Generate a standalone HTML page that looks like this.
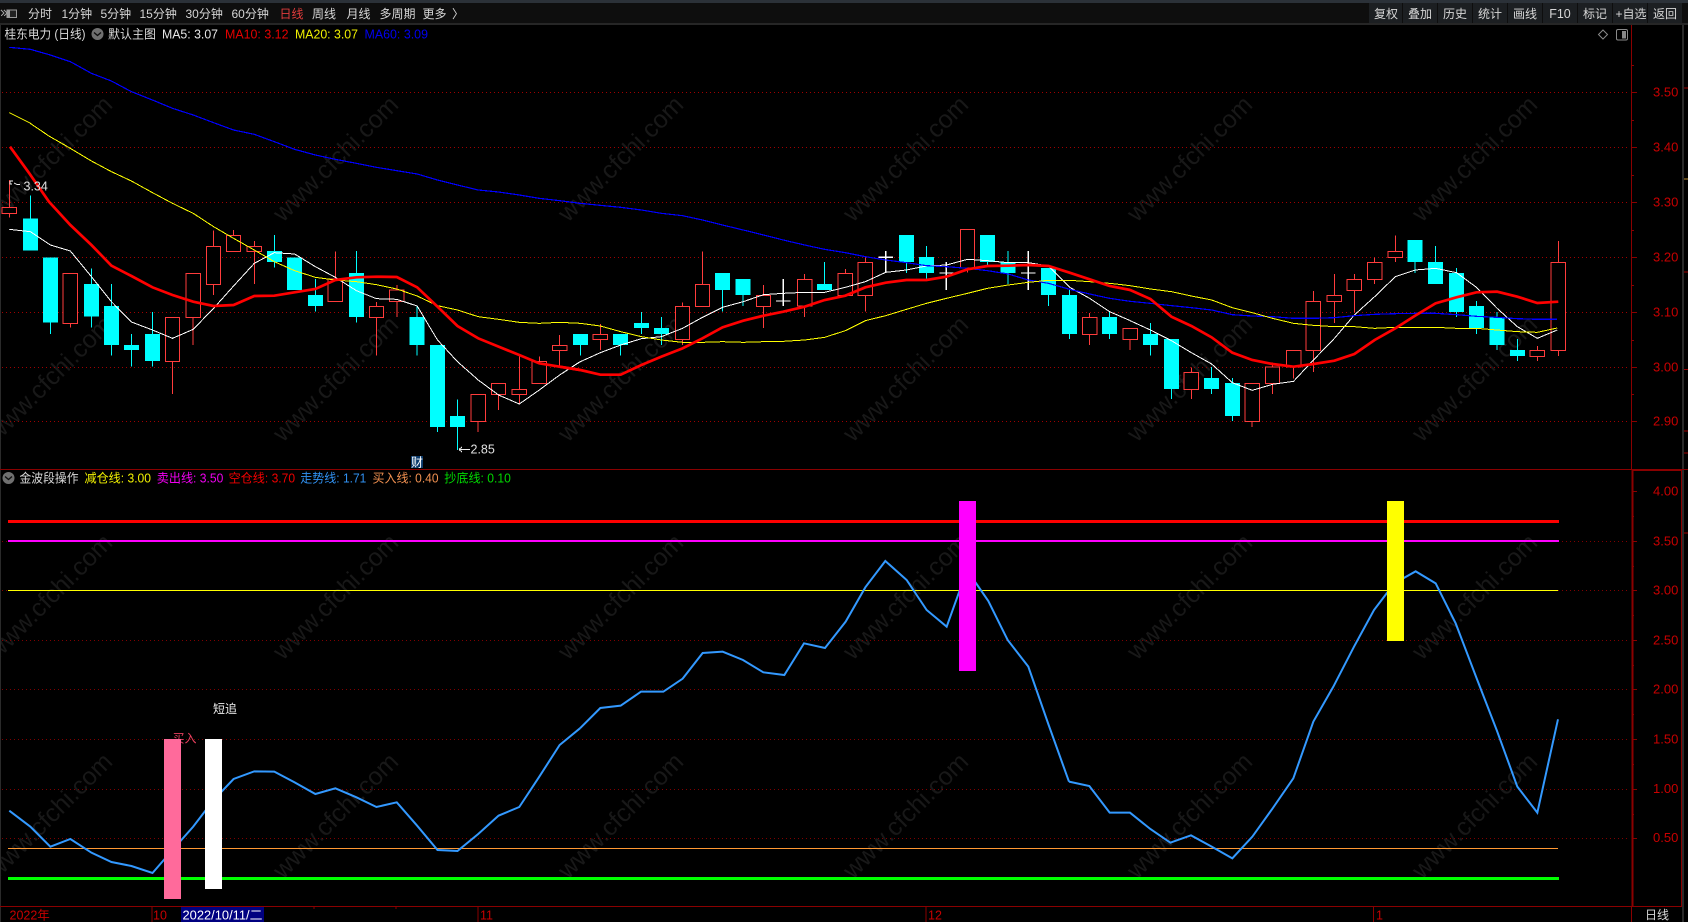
<!DOCTYPE html>
<html><head><meta charset="utf-8"><title>桂东电力</title>
<style>
html,body{margin:0;padding:0;background:#000;width:1688px;height:922px;overflow:hidden}
svg{display:block;font-family:"Liberation Sans","Noto Sans CJK SC",sans-serif;font-size:12.5px}
path,polyline{vector-effect:non-scaling-stroke;fill:none;shape-rendering:crispEdges}
.cw{stroke:#0ff;stroke-width:1}
.cb{stroke:#0ff;stroke-width:15}
.rw{stroke:#ff3c3c;stroke-width:1}
.rb{stroke:#ff3c3c;stroke-width:1;fill:#000}
.wd{stroke:#fff;stroke-width:1.4}
.m5{stroke:#fff;stroke-width:1}
.m10{stroke:#f00;stroke-width:2.7;shape-rendering:auto}
.m20{stroke:#ff0;stroke-width:1}
.m60{stroke:#00f;stroke-width:1.2}
.lb{stroke:#39f;stroke-width:2;shape-rendering:auto}
.g{stroke:#a00000;stroke-width:1;stroke-dasharray:1 3}
.g2{stroke:#800000;stroke-width:1;stroke-dasharray:1 3}
.ax{stroke:#8a0000;stroke-width:1}
.t{fill:#d6d6d6;font-size:12px}
.p{fill:#c80000;font-size:13px}
.wm{fill:#181818;font-size:25px}
</style></head><body>
<svg xmlns="http://www.w3.org/2000/svg" width="1688" height="922" viewBox="0 0 1688 922">
<rect width="1688" height="922" fill="#000"/>

<!-- watermark -->
<g class="wm" transform="translate(5 7)">
<text transform="translate(-8 216) rotate(-45)">www.cfchi.com</text><text transform="translate(278 216) rotate(-45)">www.cfchi.com</text><text transform="translate(563 216) rotate(-45)">www.cfchi.com</text><text transform="translate(848 216) rotate(-45)">www.cfchi.com</text><text transform="translate(1132 216) rotate(-45)">www.cfchi.com</text><text transform="translate(1417 216) rotate(-45)">www.cfchi.com</text>
<text transform="translate(-8 436) rotate(-45)">www.cfchi.com</text><text transform="translate(278 436) rotate(-45)">www.cfchi.com</text><text transform="translate(563 436) rotate(-45)">www.cfchi.com</text><text transform="translate(848 436) rotate(-45)">www.cfchi.com</text><text transform="translate(1132 436) rotate(-45)">www.cfchi.com</text><text transform="translate(1417 436) rotate(-45)">www.cfchi.com</text>
<text transform="translate(-8 654) rotate(-45)">www.cfchi.com</text><text transform="translate(278 654) rotate(-45)">www.cfchi.com</text><text transform="translate(563 654) rotate(-45)">www.cfchi.com</text><text transform="translate(848 654) rotate(-45)">www.cfchi.com</text><text transform="translate(1132 654) rotate(-45)">www.cfchi.com</text><text transform="translate(1417 654) rotate(-45)">www.cfchi.com</text>
<text transform="translate(-8 873) rotate(-45)">www.cfchi.com</text><text transform="translate(278 873) rotate(-45)">www.cfchi.com</text><text transform="translate(563 873) rotate(-45)">www.cfchi.com</text><text transform="translate(848 873) rotate(-45)">www.cfchi.com</text><text transform="translate(1132 873) rotate(-45)">www.cfchi.com</text><text transform="translate(1417 873) rotate(-45)">www.cfchi.com</text>
</g>

<!-- toolbar -->
<rect x="0" y="0" width="1688" height="3" fill="#2b3138"/>
<rect x="0" y="3" width="1688" height="20" fill="#0e0e0e"/>
<rect x="0" y="23" width="1688" height="2" fill="#262626"/>
<path d="M1 10l3 3-3 3M4 10l3 3-3 3" stroke="#999" stroke-width="1"/>
<rect x="7" y="10" width="9.5" height="7.5" fill="#222" stroke="#999" stroke-width="1"/>
<rect x="7" y="10" width="3" height="7.5" fill="#999"/>
<g class="t">
<text x="28" y="18">分时</text><text x="61.5" y="18">1分钟</text><text x="100.5" y="18">5分钟</text><text x="139.5" y="18">15分钟</text><text x="185.5" y="18">30分钟</text><text x="231.5" y="18">60分钟</text>
<text x="279.5" y="18" fill="#e23c3c">日线</text><text x="312" y="18">周线</text><text x="346.5" y="18">月线</text><text x="379.5" y="18">多周期</text><text x="422.5" y="18">更多</text><text x="452" y="18">〉</text>
</g>
<g fill="#1c1f22">
<rect x="1369" y="3" width="33" height="20"/><rect x="1403" y="3" width="34" height="20"/><rect x="1438" y="3" width="34" height="20"/><rect x="1473" y="3" width="34" height="20"/><rect x="1508" y="3" width="34" height="20"/><rect x="1543" y="3" width="34" height="20"/><rect x="1578" y="3" width="34" height="20"/><rect x="1613" y="3" width="34" height="20"/><rect x="1648" y="3" width="34" height="20"/>
</g>
<g class="t" text-anchor="middle">
<text x="1386" y="18">复权</text><text x="1420" y="18">叠加</text><text x="1455" y="18">历史</text><text x="1490" y="18">统计</text><text x="1525" y="18">画线</text><text x="1560" y="18" font-size="12.5">F10</text><text x="1595" y="18">标记</text><text x="1631" y="18">+自选</text><text x="1665" y="18">返回</text>
</g>

<!-- left edge and scrollbar -->
<rect x="0" y="25" width="1" height="897" fill="#2a2a2a"/>
<rect x="1682" y="25" width="2" height="897" fill="#2a2a2a"/>
<path d="M1684 88h4M1684 272h4M1684 369.5h4M1684 431h4M1684 453h4M1684 533h4" stroke="#a00000"/>
<path d="M1684 179h4" stroke="#c09030"/>

<!-- grids -->
<path class="g" d="M2 92.5H1628M2 147.5H1628M2 202.5H1628M2 257.5H1628M2 312.5H1628M2 367.5H1628M2 421.5H1628"/>
<path class="g2" d="M2 541.5H1628M2 590.5H1628M2 640.5H1628M2 689.5H1628M2 739.5H1628M2 789.5H1628M2 838.5H1628"/>

<!-- axes -->
<path class="ax" d="M1631.5 25V470M1632 92.5h5M1632 147.5h5M1632 202.5h5M1632 257.5h5M1632 312.5h5M1632 367.5h5M1632 421.5h5M1632 120.5h2M1632 175.5h2M1632 230.5h2M1632 285.5h2M1632 340.5h2M1632 394.5h2M1632 65.5h2"/>
<path class="ax" d="M0 469.5H1688M0 906.5H1682M1631.5 906V922"/>
<path d="M1632.5 470V906" stroke="#8a0000" stroke-width="2"/>
<path d="M1632 470H1682" stroke="#8a0000" stroke-width="2"/>
<path d="M1681.5 470V906" stroke="#8a0000" stroke-width="1"/>
<path class="ax" d="M1633 491.5h4M1633 541.5h4M1633 590.5h4M1633 640.5h4M1633 689.5h4M1633 739.5h4M1633 789.5h4M1633 838.5h4M1633 516.5h1M1633 566.5h1M1633 615.5h1M1633 665.5h1M1633 714.5h1M1633 764.5h1M1633 814.5h1"/>
<g class="p">
<text x="1653" y="96.5">3.50</text><text x="1653" y="151.5">3.40</text><text x="1653" y="206.5">3.30</text><text x="1653" y="261.5">3.20</text><text x="1653" y="316.5">3.10</text><text x="1653" y="371.5">3.00</text><text x="1653" y="425.5">2.90</text>
<text x="1653" y="495.5">4.00</text><text x="1653" y="545.5">3.50</text><text x="1653" y="594.5">3.00</text><text x="1653" y="644.5">2.50</text><text x="1653" y="693.5">2.00</text><text x="1653" y="743.5">1.50</text><text x="1653" y="793">1.00</text><text x="1653" y="842">0.50</text>
</g>

<!-- title row -->
<g>
<text x="4.5" y="38.5" fill="#d8d8d8" textLength="81" lengthAdjust="spacingAndGlyphs">桂东电力 (日线)</text>
<circle cx="97.5" cy="34" r="6" fill="#707070"/><path d="M94 32.5l3.500 3 3.500-3" stroke="#111" stroke-width="1.4" style="shape-rendering:auto"/>
<text x="108" y="38.5" fill="#d8d8d8" textLength="48" lengthAdjust="spacingAndGlyphs">默认主图</text>
<text x="162" y="38.5" fill="#e6e6e6" textLength="56" lengthAdjust="spacingAndGlyphs">MA5: 3.07</text>
<text x="225" y="38.5" fill="#e60000" textLength="63.500" lengthAdjust="spacingAndGlyphs">MA10: 3.12</text>
<text x="295" y="38.5" fill="#f0f000" textLength="63" lengthAdjust="spacingAndGlyphs">MA20: 3.07</text>
<text x="364.500" y="38.5" fill="#0000f0" textLength="63.500" lengthAdjust="spacingAndGlyphs">MA60: 3.09</text>
<path d="M1603 30l4.500 4.500-4.500 4.500-4.500-4.500z" stroke="#8a8a8a" style="shape-rendering:auto"/>
<rect x="1616.500" y="29.500" width="11" height="10.500" rx="1.500" fill="none" stroke="#8a8a8a"/>
<rect x="1622" y="31" width="4" height="7.500" fill="#8a8a8a"/>
</g>

<!-- S1 candles -->
<g transform="translate(0 200) scale(.35714 .33333)">
<path class="cw" d="M85 -13V55M141 368V402M256 205V383M312 252V467M368 402V500M427 336V500M768 105V203M883 237V335M998 153V368M1168 318V467M1225 681V696M1281 598V750"/>
<path class="cb" d="M85 55V152M141 172V368M256 252V350M312 318V435M368 435V450M427 402V483M768 153V186M825 172V270M883 285V318M998 219V351M1168 351V435M1225 435V681M1281 648V681"/>
<path class="rw" d="M26 -60V52M197 370V383M483 485V582M541 352V435M598 91V285M654 90V106M712 123V252M939 155V237M1054 306V467M1111 255V351M1339 665V696M1396 583V630M1454 470V612M1510 470V484M1567 405V500"/>
<path class="rb" d="M6 22h40V40h-40zM177 220h40V370h-40zM463 352h40V485h-40zM521 220h40V352h-40zM578 139h40V253h-40zM634 106h40V155h-40zM692 139h40V155h-40zM919 237h40V305h-40zM1034 319h40V352h-40zM1091 270h40V305h-40zM1319 583h40V665h-40zM1376 550h40V583h-40zM1434 568h40V584h-40zM1490 484h40V551h-40zM1547 436h40V452h-40z"/>
</g>
<!-- S2 candles -->
<g transform="translate(560 200) scale(.35714 .33333)">
<path class="cw" d="M57 435V467M170 435V467M228 336V402M284 351V435M455 270V335M513 285V318M741 186V252M970 186V219M1026 138V235M1197 186V196M1255 153V252M1368 285V318M1427 270V417M1539 336V417"/>
<path class="cb" d="M57 402V435M170 402V435M228 369V384M284 384V402M455 219V270M513 237V285M741 252V270M970 105V186M1026 171V219M1197 105V186M1255 186V219M1368 204V285M1427 285V402M1539 351V402"/>
<path class="rw" d="M113 372V450M343 307V435M399 155V320M570 255V384M685 222V351M799 207V287M855 172V335M1141 204V218M1483 339V435"/>
<path class="rb" d="M93 403h40V419h-40zM323 319h40V418h-40zM379 253h40V320h-40zM550 286h40V320h-40zM665 238h40V318h-40zM779 220h40V287h-40zM835 187h40V287h-40zM1121 88h40V204h-40zM1463 352h40V404h-40z"/>
<path class="wd" d="M625 237V318M605 303h40M912 153V219M892 172h40M1082 186V270M1062 219h40M1311 153V270M1291 219h40"/>
</g>
<!-- S3 candles -->
<g transform="translate(1120 200) scale(.36224 .33333)">
<path class="cw" d="M84 369V467M142 567V597M253 501V582M310 534V663M815 186V219M871 138V186M929 204V351M984 303V402M1041 336V450M1097 417V483"/>
<path class="cb" d="M84 402V435M142 417V567M253 534V567M310 549V648M815 120V186M871 186V252M929 219V336M984 318V384M1041 351V435M1097 450V468"/>
<path class="rw" d="M28 385V450M197 503V597M365 665V681M421 487V582M479 501V535M534 273V516M592 222V369M647 222V337M703 172V252M760 107V186M1152 438V483M1210 123V468"/>
<path class="rb" d="M8 385h40V418h-40zM177 517h40V569h-40zM345 550h40V665h-40zM401 501h40V551h-40zM459 451h40V501h-40zM514 304h40V452h-40zM572 286h40V304h-40zM627 238h40V272h-40zM683 187h40V238h-40zM740 154h40V172h-40zM1132 451h40V469h-40zM1190 187h40V452h-40z"/>
</g>

<!-- MA lines -->
<g transform="translate(0 200) scale(.35714 .33333)">
<polyline class="m5" points="26,88 85,95 141,135 197,153 256,230 312,305 368,366 427,390 483,415 541,388 598,325 654,258 712,190 768,158 825,162 883,200 939,232 998,272 1054,296 1111,298 1168,318 1225,420 1281,485 1339,540 1396,585 1454,612 1510,570 1567,525 1624,485"/>
</g>
<g transform="translate(560 200) scale(.35714 .33333)">
<polyline class="m5" points="-1,525 57,485 113,458 170,435 228,416 284,410 343,385 399,352 455,322 513,305 570,284 625,280 685,277 741,277 799,262 855,245 912,217 970,210 1026,198 1082,195 1141,178 1197,182 1255,188 1311,188 1368,198 1427,262 1483,295 1539,335 1597,362"/>
</g>
<g transform="translate(1120 200) scale(.36224 .33333)">
<polyline class="m5" points="28,362 84,390 142,422 197,458 253,492 310,548 365,571 421,553 479,544 534,480 592,415 647,345 703,290 760,230 815,210 871,205 929,218 984,262 1041,325 1097,380 1152,415 1207,390"/>
</g>

<g transform="translate(0 200) scale(.35714 .33333)">
<polyline class="m60" points="26,-458 85,-452 141,-435 197,-415 256,-380 312,-357 368,-325 427,-300 483,-275 541,-255 598,-232 654,-210 712,-197 768,-175 825,-152 883,-135 939,-122 998,-110 1054,-98 1111,-88 1168,-78 1225,-60 1281,-45 1339,-30 1396,-24 1454,-15 1510,-5 1567,2 1624,10"/>
<polyline class="m20" points="26,-262 82,-232 137,-192 197,-155 256,-117 312,-85 368,-57 427,-22 483,10 541,40 598,80 654,115 712,150 768,185 825,212 883,232 939,240 998,245 1054,254 1111,267 1168,288 1225,317 1281,330 1339,350 1396,358 1454,367 1510,370 1567,367 1624,370"/>
<polyline class="m10" points="28,-160 82,-80 137,5 197,75 256,135 312,197 368,228 427,262 483,285 541,305 598,318 654,315 712,288 768,287 825,277 883,267 939,240 998,232 1054,230 1111,231 1168,262 1225,320 1281,378 1339,415 1396,440 1454,465 1510,490 1567,500 1624,510"/>
</g>
<g transform="translate(560 200) scale(.35714 .33333)">
<polyline class="m60" points="-1,2 57,10 113,16 170,22 228,30 284,40 343,47 399,60 455,75 513,90 570,105 625,120 685,135 741,148 799,158 855,170 912,180 970,188 1026,197 1082,200 1141,205 1197,212 1255,222 1311,240 1368,250 1427,268 1483,282 1539,295 1597,304"/>
<polyline class="m20" points="-1,367 57,370 113,378 170,395 228,410 284,420 343,427 399,427 455,425 513,427 570,425 625,424 685,420 741,412 799,392 855,362 912,347 970,328 1026,310 1082,295 1141,280 1197,265 1255,255 1311,247 1368,241 1427,241 1483,245 1539,250 1597,257"/>
<polyline class="m10" points="-1,500 57,510 113,524 170,524 228,495 284,470 343,445 399,415 455,382 513,362 570,347 625,335 685,320 741,300 799,287 855,262 912,248 970,240 1026,240 1082,230 1141,208 1197,198 1255,197 1311,195 1368,198 1427,218 1483,238 1539,258 1597,270"/>
</g>
<g transform="translate(1120 200) scale(.36224 .33333)">
<polyline class="m60" points="28,304 84,310 142,317 197,323 253,330 310,344 365,348 421,350 479,355 534,355 592,353 647,347 703,343 760,341 815,340 871,340 929,344 984,349 1041,352 1097,356 1152,358 1207,358"/>
<polyline class="m20" points="28,257 84,267 142,275 197,288 253,300 310,323 365,338 421,355 479,370 534,376 592,380 647,380 703,385 760,382 815,382 871,382 929,385 984,385 1041,390 1097,395 1152,397 1207,384"/>
<polyline class="m10" points="28,270 84,297 142,350 197,378 253,412 310,458 365,480 421,492 479,500 534,492 592,482 647,462 703,420 760,385 815,347 871,310 929,292 984,277 1041,275 1097,290 1152,309 1210,305"/>
</g>

<!-- annotations main -->
<path d="M10 181h3M10 181v3h2M14 183l3 1.500h3" stroke="#eee" stroke-width="1"/>
<text x="23.500" y="190.500" fill="#e0e0e0">3.34</text>
<path d="M459 449.500h11M459 449.500l3-2.500M459 449.500l3 2.500" stroke="#eee" stroke-width="1"/>
<text x="470.500" y="453.500" fill="#e0e0e0">2.85</text>
<rect x="411" y="456" width="12" height="12" fill="#0b3a6b"/>
<text x="411" y="466.500" fill="#fff" font-size="12">财</text>

<!-- lower legend -->
<circle cx="8.500" cy="478" r="6" fill="#707070"/><path d="M5 476.500l3.500 3 3.500-3" stroke="#111" stroke-width="1.400" style="shape-rendering:auto"/>
<text x="19.500" y="482.500" fill="#d8d8d8" textLength="59" lengthAdjust="spacingAndGlyphs">金波段操作</text>
<text x="84.500" y="482.500" fill="#f0f000" textLength="66.500" lengthAdjust="spacingAndGlyphs">减仓线: 3.00</text>
<text x="156.800" y="482.500" fill="#f000f0" textLength="66.500" lengthAdjust="spacingAndGlyphs">卖出线: 3.50</text>
<text x="228.600" y="482.500" fill="#f00000" textLength="66.500" lengthAdjust="spacingAndGlyphs">空仓线: 3.70</text>
<text x="300.300" y="482.500" fill="#3090f0" textLength="66" lengthAdjust="spacingAndGlyphs">走势线: 1.71</text>
<text x="372.500" y="482.500" fill="#f09050" textLength="66" lengthAdjust="spacingAndGlyphs">买入线: 0.40</text>
<text x="444.300" y="482.500" fill="#00d800" textLength="66.500" lengthAdjust="spacingAndGlyphs">抄底线: 0.10</text>

<!-- lower level lines -->
<path d="M8 521.500H1559" stroke="#f00" stroke-width="3"/>
<path d="M8 541H1559" stroke="#f0f" stroke-width="2"/>
<path d="M8 590.500H1558" stroke="#ff0" stroke-width="1"/>
<path d="M8 848.500H1558" stroke="#f93" stroke-width="1"/>
<path d="M8 878.500H1559" stroke="#0f0" stroke-width="3"/>

<!-- lower line -->
<g transform="translate(0 680) scale(.35714 .33333)">
<polyline class="lb" points="26,392 85,440 141,500 197,477 256,518 312,546 368,558 427,579 483,510 541,440 598,360 654,297 712,274 768,275 825,307 883,342 939,325 998,352 1054,381 1111,367 1168,437 1225,510 1281,513 1339,462 1396,407 1454,381 1510,290 1567,195 1624,145"/>
</g>
<g transform="translate(540 490) scale(.33333)">
<polyline class="lb" points="120,715 181,654 242,647 303,605 370,605 428,566 488,489 548,485 609,510 670,547 733,555 792,460 855,474 917,395 976,292 1036,213 1100,270 1160,360 1220,410 1281,240 1345,333 1403,450 1465,530 1526,705 1587,875"/>
</g>
<g transform="translate(1060 490) scale(.33333)">
<polyline class="lb" points="27,875 88,888 149,968 210,968 271,1017 331,1058 393,1036 455,1070 517,1105 577,1040 638,955 700,865 760,695 820,590 882,470 942,360 1003,280 1067,244 1127,280 1187,400 1250,565 1310,720 1372,890 1432,968 1494,688"/>
</g>

<!-- signal labels and bars -->
<text x="172.500" y="742.500" fill="#e8405f" font-size="12">买入</text>
<text x="213" y="713" fill="#eee" font-size="12">短追</text>
<rect x="164" y="739" width="17" height="160" fill="#ff6a9b"/>
<rect x="205" y="739" width="17" height="150" fill="#fff"/>
<rect x="959" y="501" width="17" height="170" fill="#f0f"/>
<rect x="1387" y="501" width="17" height="140" fill="#ff0"/>

<!-- bottom axis -->
<path class="ax" d="M152 906V922M478 906V922M926 906V922M1373.500 906V922M314 906v3M396 906v3"/>
<g class="p" style="font-size:12.500px">
<text x="9.500" y="919.500">2022年</text>
<text x="153" y="919.500">10</text>
<text x="480" y="919.500">11</text>
<text x="928" y="919.500">12</text>
<text x="1376" y="919.500">1</text>
</g>
<rect x="181" y="907" width="83" height="15" fill="#000080"/>
<text x="182.500" y="919.500" fill="#fff" textLength="80" lengthAdjust="spacingAndGlyphs">2022/10/11/二</text>
<text x="1645" y="919" class="t">日线</text>
</svg>
</body></html>
